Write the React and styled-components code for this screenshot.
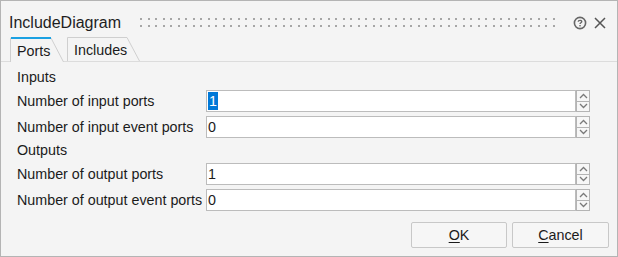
import React from "react";
import styled, { createGlobalStyle } from "styled-components";

const GlobalStyle = createGlobalStyle`
  html, body {
    margin: 0;
    padding: 0;
    background: #ffffff;
  }
  * {
    box-sizing: border-box;
  }
`;

const Window = styled.div`
  width: 618px;
  height: 257px;
  border: 1px solid #b4b4b4;
  background: #f4f4f4;
  display: flex;
  flex-direction: column;
  font-family: "Liberation Sans", Arial, sans-serif;
  color: #1b1b1b;
`;

const TitleBar = styled.div`
  height: 36px;
  padding: 7px 10px 0 8px;
  display: flex;
  align-items: center;
`;

const Title = styled.div`
  font-size: 16px;
  color: #1e1e1e;
  white-space: nowrap;
`;

const Grip = styled.div`
  flex: 1;
  height: 9px;
  margin: 0 14px 0 19px;
  display: flex;
  svg {
    display: block;
  }
`;

const IconButton = styled.div`
  width: 14px;
  height: 14px;
  display: flex;
  align-items: center;
  justify-content: center;
  margin-left: ${(p) => p.gap || 0}px;
`;

const TabStrip = styled.div`
  height: 25px;
  display: flex;
  align-items: flex-end;
  padding-left: 9px;
  border-bottom: 1px solid #dcdcdc;
`;

const Tab = styled.div`
  position: relative;
  height: ${(p) => (p.active ? 25 : 24)}px;
  width: ${(p) => p.w}px;
  margin-right: ${(p) => p.mr || 0}px;
  margin-bottom: ${(p) => (p.active ? -1 : 0)}px;
  padding-left: 7px;
  display: flex;
  align-items: center;
  font-size: 14.3px;
  color: #1b1b1b;
  span {
    position: relative;
    padding-top: ${(p) => (p.active ? 3 : 1)}px;
  }
  svg {
    position: absolute;
    left: 0;
    top: 0;
  }
`;

const Content = styled.div`
  flex: 1;
  padding: 7px 27px 0 16px;
  display: flex;
  flex-direction: column;
  gap: 4px;
  font-size: 14.3px;
`;

const Heading = styled.div`
  height: 17px;
  line-height: 17px;
`;

const Row = styled.div`
  display: grid;
  grid-template-columns: 189px 1fr 14px;
  height: 22px;
  align-items: center;
`;

const Label = styled.div`
  white-space: nowrap;
`;

const Field = styled.div`
  height: 22px;
  background: #ffffff;
  border: 1px solid #bcbcbc;
  padding-left: 1px;
  display: flex;
  align-items: center;
`;

const Selected = styled.span`
  background: #0078d7;
  color: #ffffff;
  padding: 0 1px;
  line-height: 18px;
`;

const Spinner = styled.div`
  height: 22px;
  display: flex;
  flex-direction: column;
`;

const SpinHalf = styled.div`
  flex: 1;
  border: 1px solid #b4b4b4;
  border-top-width: ${(p) => (p.down ? 0 : 1)}px;
  background: #f7f7f7;
  display: flex;
  align-items: center;
  justify-content: center;
`;

const Footer = styled.div`
  display: flex;
  justify-content: flex-end;
  gap: 5px;
  padding: 0 8px 8px 0;
`;

const Button = styled.div`
  width: ${(p) => p.w}px;
  height: 26px;
  border: 1px solid #c8c8c8;
  border-radius: 2px;
  background: #f6f6f6;
  display: flex;
  align-items: center;
  justify-content: center;
  font-size: 14.3px;
  color: #1b1b1b;
  u {
    text-decoration: underline;
    text-underline-offset: 2px;
  }
`;

const GripDots = () => (
  <svg width="100%" height="9">
    <defs>
      <pattern id="grip" width="15" height="9" patternUnits="userSpaceOnUse">
        <rect x="0" y="0" width="2" height="2" fill="#a6a6a6" />
        <rect x="0" y="7" width="2" height="2" fill="#a6a6a6" />
        <rect x="8" y="0" width="2" height="2" fill="#a6a6a6" />
        <rect x="8" y="7" width="2" height="2" fill="#a6a6a6" />
      </pattern>
    </defs>
    <rect x="0" y="0" width="100%" height="9" fill="url(#grip)" />
  </svg>
);

const HelpIcon = () => (
  <svg width="14" height="14" viewBox="0 0 14 14">
    <circle cx="7" cy="7" r="5.6" fill="none" stroke="#666666" strokeWidth="1.6" />
    <path
      d="M5.2 5.7 C5.2 3.9 8.8 3.9 8.8 5.6 C8.8 6.8 7 6.7 7 8"
      fill="none"
      stroke="#666666"
      strokeWidth="1.3"
    />
    <rect x="6.3" y="9" width="1.4" height="1.4" fill="#666666" />
  </svg>
);

const CloseIcon = () => (
  <svg width="12" height="12" viewBox="0 0 12 12">
    <path d="M1 1 L11 11 M11 1 L1 11" stroke="#555555" strokeWidth="1.5" />
  </svg>
);

const TabShape = ({ w, h, active }) => (
  <svg width={w} height={h}>
    <path
      d={`M0.5 ${h} L0.5 ${active ? 1 : 0.5} L${w - 13} ${active ? 1 : 0.5} L${w - 0.5} ${h}`}
      fill="#f4f4f4"
      stroke="#cfcfcf"
      strokeWidth="1"
    />
    {active && <rect x="1" y="0" width={w - 14} height="2" fill="#1ba1e2" />}
  </svg>
);

const Chevron = ({ up }) => (
  <svg width="9" height="6" viewBox="0 0 9 6">
    <path
      d={up ? "M1 5 L4.5 1.5 L8 5" : "M1 1 L4.5 4.5 L8 1"}
      fill="none"
      stroke="#7a7a7a"
      strokeWidth="1.3"
    />
  </svg>
);

const NumberRow = ({ label, value, selected }) => (
  <Row>
    <Label>{label}</Label>
    <Field>{selected ? <Selected>{value}</Selected> : <span>{value}</span>}</Field>
    <Spinner>
      <SpinHalf>
        <Chevron up />
      </SpinHalf>
      <SpinHalf down>
        <Chevron />
      </SpinHalf>
    </Spinner>
  </Row>
);

const App = () => {
  return (
    <>
      <GlobalStyle />
      <Window>
        <TitleBar>
          <Title>IncludeDiagram</Title>
          <Grip>
            <GripDots />
          </Grip>
          <IconButton>
            <HelpIcon />
          </IconButton>
          <IconButton gap={6}>
            <CloseIcon />
          </IconButton>
        </TitleBar>
        <TabStrip>
          <Tab active w={54} mr={3}>
            <TabShape w={54} h={25} active />
            <span>Ports</span>
          </Tab>
          <Tab w={73}>
            <TabShape w={73} h={24} />
            <span>Includes</span>
          </Tab>
        </TabStrip>
        <Content>
          <Heading>Inputs</Heading>
          <NumberRow label="Number of input ports" value="1" selected />
          <NumberRow label="Number of input event ports" value="0" />
          <Heading>Outputs</Heading>
          <NumberRow label="Number of output ports" value="1" />
          <NumberRow label="Number of output event ports" value="0" />
        </Content>
        <Footer>
          <Button w={96}>
            <span>
              <u>O</u>K
            </span>
          </Button>
          <Button w={97}>
            <span>
              <u>C</u>ancel
            </span>
          </Button>
        </Footer>
      </Window>
    </>
  );
};

export default App;
